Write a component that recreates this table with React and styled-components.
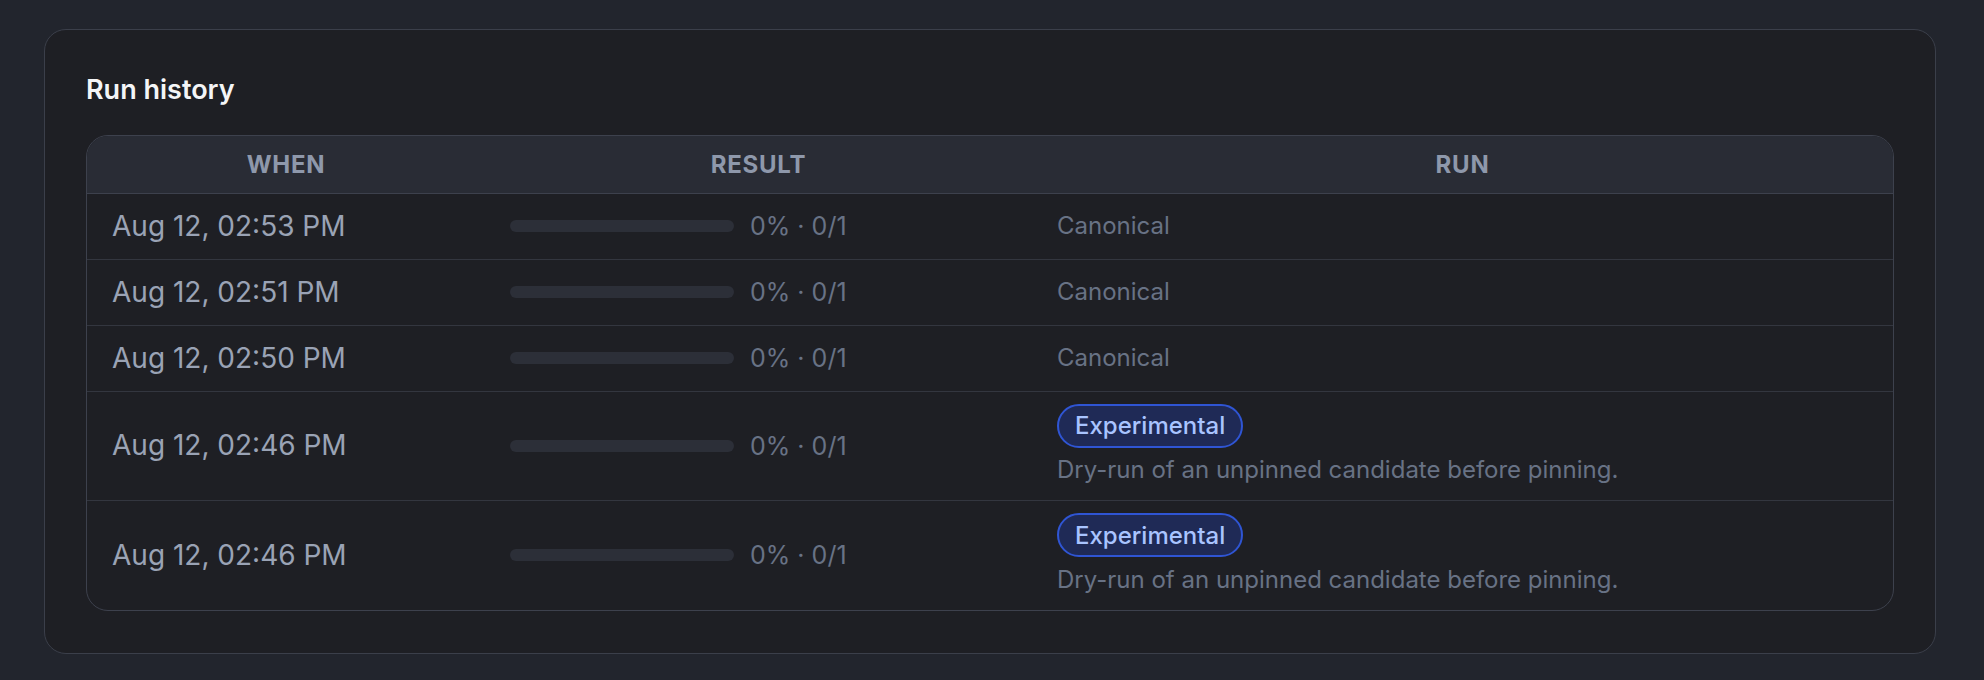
import React from 'react';
import styled, { createGlobalStyle } from 'styled-components';

const GlobalStyle = createGlobalStyle`
  html, body {
    margin: 0;
    padding: 0;
    background: #22252d;
  }

  body {
    font-family: Inter, 'Noto Sans', 'Liberation Sans', sans-serif;
    -webkit-font-smoothing: antialiased;
  }
`;

const Page = styled.div`
  padding: 29px 48px 27px 44px;
  min-height: 680px;
  box-sizing: border-box;
`;

const Card = styled.section`
  width: 1892px;
  box-sizing: border-box;
  padding: 40px 41px 42px;
  background: #1e1f24;
  border: 1px solid #3b3f4a;
  border-radius: 22px;
  display: flex;
  flex-direction: column;
  gap: 24px;
`;

const Title = styled.h2`
  margin: 0;
  font-size: 27px;
  line-height: 1.5;
  font-weight: 600;
  color: #f4f5f7;
`;

const Table = styled.div`
  border: 1px solid #3d414d;
  border-radius: 22px;
  overflow: hidden;
`;

const Row = styled.div`
  display: grid;
  grid-template-columns: 398px 547px 1fr;
  align-items: center;
  border-bottom: 1px solid ${(p) => (p.$head ? '#3d414d' : '#33363f')};
  background: ${(p) => (p.$head ? '#292c35' : 'transparent')};
  min-height: ${(p) => (p.$head ? '57px' : '65px')};

  &:last-child {
    border-bottom: none;
  }
`;

const HeadCell = styled.div`
  text-align: center;
  font-size: 24px;
  font-weight: 700;
  letter-spacing: 0.03em;
  text-transform: uppercase;
  color: #8e98ab;
`;

const Cell = styled.div`
  padding: 12px 24px 12px 25px;
  display: flex;
  flex-direction: ${(p) => (p.$stack ? 'column' : 'row')};
  align-items: ${(p) => (p.$stack ? 'flex-start' : 'center')};
  gap: ${(p) => (p.$stack ? '4.5px' : '16px')};
`;

const When = styled.span`
  font-size: 28px;
  line-height: 41px;
  color: #9aa3b5;
`;

const Track = styled.div`
  width: 224px;
  height: 12px;
  border-radius: 6px;
  background: #2c2f38;
  overflow: hidden;
`;

const Fill = styled.div`
  height: 100%;
  background: #4ade80;
`;

const Muted = styled.span`
  font-size: ${(p) => (p.$size ? p.$size : '24px')};
  line-height: 36px;
  color: #687285;
`;

const Badge = styled.span`
  display: inline-flex;
  align-items: center;
  height: 44px;
  box-sizing: border-box;
  padding: 0 16px;
  border: 2px solid #2f55d4;
  border-radius: 22px;
  background: #1f2a56;
  color: #a9c4ff;
  font-size: 24px;
  font-weight: 500;
`;

const runs = [
  { when: 'Aug 12, 02:53 PM', passed: 0, total: 1, kind: 'canonical' },
  { when: 'Aug 12, 02:51 PM', passed: 0, total: 1, kind: 'canonical' },
  { when: 'Aug 12, 02:50 PM', passed: 0, total: 1, kind: 'canonical' },
  {
    when: 'Aug 12, 02:46 PM',
    passed: 0,
    total: 1,
    kind: 'experimental',
    note: 'Dry-run of an unpinned candidate before pinning.',
  },
  {
    when: 'Aug 12, 02:46 PM',
    passed: 0,
    total: 1,
    kind: 'experimental',
    note: 'Dry-run of an unpinned candidate before pinning.',
  },
];

const RunHistory = () => (
  <Card>
    <Title>Run history</Title>
    <Table>
      <Row $head>
        <HeadCell>When</HeadCell>
        <HeadCell>Result</HeadCell>
        <HeadCell>Run</HeadCell>
      </Row>
      {runs.map((run, i) => {
        const pct = Math.round((run.passed / run.total) * 100);
        return (
          <Row key={i}>
            <Cell>
              <When>{run.when}</When>
            </Cell>
            <Cell>
              <Track>
                <Fill style={{ width: `${pct}%` }} />
              </Track>
              <Muted $size="25px">
                {pct}% · {run.passed}/{run.total}
              </Muted>
            </Cell>
            {run.kind === 'experimental' ? (
              <Cell $stack>
                <Badge>Experimental</Badge>
                <Muted>{run.note}</Muted>
              </Cell>
            ) : (
              <Cell>
                <Muted>Canonical</Muted>
              </Cell>
            )}
          </Row>
        );
      })}
    </Table>
  </Card>
);

export default function App() {
  return (
    <>
      <GlobalStyle />
      <Page>
        <RunHistory />
      </Page>
    </>
  );
}
